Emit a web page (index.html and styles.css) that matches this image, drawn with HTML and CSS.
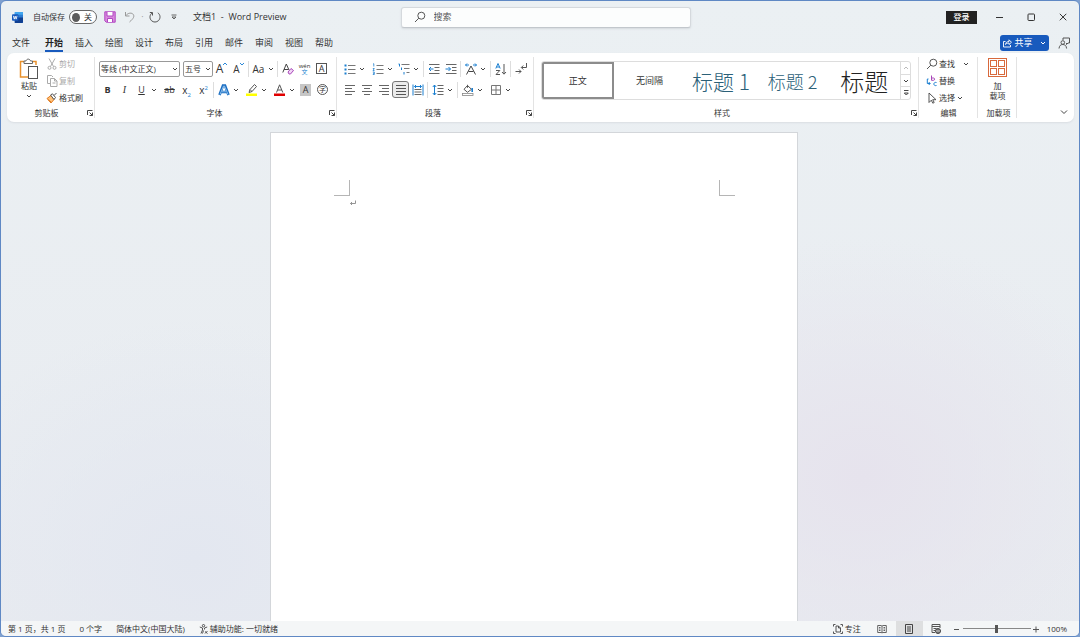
FILE: index.html
```
<!DOCTYPE html>
<html lang="zh-CN">
<head>
<meta charset="utf-8">
<title>文档1 - Word Preview</title>
<link rel="stylesheet" href="styles.css">
</head>
<body>
<svg class="defs" aria-hidden="true">
  <symbol id="chev" viewBox="0 0 8 8"><path d="M2 3l2 2 2-2" fill="none" stroke="#444" stroke-width="1"/></symbol>
  <symbol id="launch" viewBox="0 0 8 8"><path d="M1.500 6V1.500h5M3.500 3.500l3 3M6.500 3.500v3h-3" fill="none" stroke="#444" stroke-width="1"/></symbol>
  <symbol id="lens" viewBox="0 0 12 12"><circle cx="7.300" cy="4.700" r="3.500" fill="none" stroke="#555"/><path d="M4.800 7.200L1 11" stroke="#555"/></symbol>
</svg>
<div class="window">
  <header class="titlebar">
    <div class="title-left">
      <svg class="logo" viewBox="0 0 12 12"><rect x="3" y="0" width="9" height="12" rx="1" fill="#2b7cd3"/><rect x="3" y="0" width="9" height="3" fill="#41a5ee"/><path d="M3 6h9v5a1 1 0 0 1-1 1H3z" fill="#103f91"/><rect x="0" y="2.500" width="7" height="7" rx="1" fill="#185abd"/><path d="M1.500 4.200l1 3.600 1-3.300 1 3.300 1-3.600" fill="none" stroke="#fff" stroke-width=".9"/></svg>
      <label class="autosave" for="autosave">自动保存</label>
      <span class="toggle"><input type="checkbox" id="autosave"><span class="toggle-text">关</span></span>
      <button class="qa save" aria-label="保存"><svg class="i12" viewBox="0 0 12 12"><path d="M.8.8h10.400v10.400H2.200L.8 9.800z" fill="#d88add" stroke="#b146c2"/><path d="M3 1v4h6V1" fill="#fff" stroke="#b146c2"/><path d="M3.500 11V7.500h5V11" fill="#fff" stroke="#b146c2"/></svg></button>
      <button class="qa undo" aria-label="撤消"><svg class="i12" viewBox="0 0 12 12"><path d="M1.500 1v4h4M1.700 4.800C4 1.500 8 1.500 9.300 3.500c1.300 2 .2 4-3.800 7.500" fill="none" stroke="#999"/></svg></button>
      <span class="dot">·</span>
      <button class="qa" aria-label="重复"><svg class="i12" viewBox="0 0 12 12"><path d="M3.500 1.500H.8M3.500 1.500v3M3 2C.5 4 .3 7.500 2.500 9.700c2 1.800 5 1.800 7-.1 2.200-2.200 2-6-.7-7.800" fill="none" stroke="#555"/></svg></button>
      <button class="qa more" aria-label="自定义快速访问工具栏"><svg class="i8" viewBox="0 0 8 8"><path d="M1.500 2h5M2 4l2 2 2-2z" fill="none" stroke="#555" stroke-width=".9"/></svg></button>
      <span class="doc-title">文档1&nbsp; -&nbsp; Word Preview</span>
    </div>
    <label class="search"><svg class="i12" viewBox="0 0 12 12"><use href="#lens"/></svg><input type="text" placeholder="搜索" aria-label="搜索"></label>
    <div class="title-right">
      <button class="signin">登录</button>
      <button class="win" aria-label="最小化"><svg class="i8" viewBox="0 0 8 8"><path d="M1 4.500h7" stroke="#333"/></svg></button>
      <button class="win" aria-label="最大化"><svg class="i8" viewBox="0 0 8 8"><rect x="1" y="1" width="6.500" height="6.500" rx=".8" fill="none" stroke="#333"/></svg></button>
      <button class="win" aria-label="关闭"><svg class="i8" viewBox="0 0 8 8"><path d="M.8.8l6.500 6.500M7.300.8L.8 7.300" stroke="#333"/></svg></button>
    </div>
  </header>

  <nav class="tabs">
    <button class="tab file">文件</button><button class="tab active"><span>开始</span></button><button class="tab">插入</button><button class="tab">绘图</button><button class="tab">设计</button><button class="tab">布局</button><button class="tab">引用</button><button class="tab">邮件</button><button class="tab">审阅</button><button class="tab">视图</button><button class="tab">帮助</button>
    <div class="tabs-end">
      <button class="share"><svg class="i10" viewBox="0 0 10 10"><path d="M3.500 3.500H1.500v5.500h7V7M3.500 6.500c.3-2.200 1.500-3 3.500-3V1.800l2.500 2.500L7 6.500V5c-1.500 0-2.500.3-3.500 1.500z" fill="none" stroke="#fff" stroke-width=".9"/></svg><span>共享</span><svg class="i8" viewBox="0 0 8 8"><path d="M2 3l2 2 2-2" fill="none" stroke="#fff"/></svg></button>
      <button class="qa" aria-label="批注"><svg class="i12" viewBox="0 0 12 12"><path d="M5 3V1h6.500v5H10L8.500 7.500V6" fill="none" stroke="#555"/><circle cx="4.800" cy="5.500" r="1.800" fill="none" stroke="#555"/><path d="M1 11.500c.3-3 1.800-4 3.800-4s3.500 1 3.800 4" fill="none" stroke="#555"/></svg></button>
    </div>
  </nav>

  <section class="ribbon">
    <div class="group clipboard">
      <div class="group-body clip-body">
        <button class="big paste"><svg class="i22" viewBox="0 0 22 22"><path d="M6 3.500H2.500v15.500h8M14.500 3.500H18V7" fill="none" stroke="#e8912d" stroke-width="1.500"/><path d="M6 5.500V3h2c.5-2.500 4-2.500 4.500 0h2v2.500z" fill="#fff" stroke="#666"/><rect x="10.500" y="8.500" width="9" height="12" fill="#fff" stroke="#555"/></svg><span>粘贴</span><svg class="i8" viewBox="0 0 8 8"><use href="#chev"/></svg></button>
        <div class="stack">
          <button class="cmd" disabled><svg class="i12" viewBox="0 0 12 12"><path d="M3 .5l4.500 8M9 .5l-4.500 8" stroke="#aaa"/><circle cx="3.500" cy="9.800" r="1.500" fill="none" stroke="#aaa"/><circle cx="8.500" cy="9.800" r="1.500" fill="none" stroke="#aaa"/></svg>剪切</button>
          <button class="cmd" disabled><svg class="i12" viewBox="0 0 12 12"><path d="M5 8.500H1.500v-8h4l1.500 1.500" fill="none" stroke="#aaa"/><path d="M4.500 3.500h4l2.500 2.500v5.500H4.500zM8.500 3.500V6H11M6.500 8h3" fill="none" stroke="#aaa"/></svg>复制</button>
          <button class="cmd"><svg class="i12" viewBox="0 0 12 12"><path d="M1 6.500l4-3 3 4-3 3.500z" fill="#ffc27a" stroke="#e07a1f"/><path d="M4.500 3L6.500 1.800 9.500 5.500 8 7.500zM8 3.500L10.500 1" fill="#fff" stroke="#555"/><path d="M2 7.500l3 2.500" stroke="#e07a1f"/></svg>格式刷</button>
        </div>
      </div>
      <div class="group-label"><span>剪贴板</span><button aria-label="剪贴板选项"><svg class="i8" viewBox="0 0 8 8"><use href="#launch"/></svg></button></div>
    </div>

    <div class="group font">
      <div class="group-body">
        <div class="row">
          <label class="combo family"><select aria-label="字体"><option>等线 (中文正文)</option></select><svg class="i8" viewBox="0 0 8 8"><use href="#chev"/></svg></label>
          <label class="combo size"><select aria-label="字号"><option>五号</option></select><svg class="i8" viewBox="0 0 8 8"><use href="#chev"/></svg></label>
          <button class="ib" aria-label="增大字号"><span class="grow">A</span><svg class="sup" viewBox="0 0 4 8"><path d="M0 3l2-2 2 2" fill="none" stroke="#2b88d8"/></svg></button>
          <button class="ib" aria-label="减小字号"><span class="shrink">A</span><svg class="sup" viewBox="0 0 4 8"><path d="M0 1l2 2 2-2" fill="none" stroke="#2b88d8"/></svg></button>
          <i class="sep"></i>
          <button class="ib case" aria-label="更改大小写">Aa</button><button class="chev" aria-label="大小写选项"><svg class="i8" viewBox="0 0 8 8"><use href="#chev"/></svg></button>
          <i class="sep"></i>
          <button class="ib" aria-label="清除格式"><svg class="i12" viewBox="0 0 12 12"><path d="M.8 9.500L4.300 1 7 7M2 6.500h4.500" fill="none" stroke="#444"/><path d="M6 9l3-3.500 2.500 2L8.500 11H7z" fill="#f0d5f5" stroke="#a847b8"/></svg></button>
          <button class="ib pinyin" aria-label="拼音指南"><span>wén</span><span class="wen">文</span></button>
          <button class="ib" aria-label="字符边框"><span class="boxed">A</span></button>
        </div>
        <div class="row">
          <button class="ib bold" aria-label="加粗">B</button>
          <button class="ib italic" aria-label="倾斜">I</button>
          <button class="ib under" aria-label="下划线">U</button><button class="chev" aria-label="下划线选项"><svg class="i8" viewBox="0 0 8 8"><use href="#chev"/></svg></button>
          <button class="ib strike" aria-label="删除线">ab</button>
          <button class="ib script" aria-label="下标"><span>x<sub>2</sub></span></button>
          <button class="ib script" aria-label="上标"><span>x<sup>2</sup></span></button>
          <i class="sep"></i>
          <button class="ib" aria-label="文本效果"><svg class="i12" viewBox="0 0 12 12"><path d="M1.500 11L5 1.500h2L10.500 11M3.500 8h5" fill="none" stroke="#1b6ec2" stroke-width="2.600"/><path d="M2 10.500L5.500 2h1L10 10.500M4 7.800h4" fill="none" stroke="#a9d3f5" stroke-width=".8"/></svg></button><button class="chev" aria-label="文本效果选项"><svg class="i8" viewBox="0 0 8 8"><use href="#chev"/></svg></button>
          <button class="ib push" aria-label="突出显示"><svg class="i12" viewBox="0 0 12 12"><rect x="0" y="9.500" width="11" height="2.500" fill="#ff0"/><path d="M3 8.500l1-3 4.500-5 2 2L6 7.500zM4 5.500l2 2" fill="#fff" stroke="#555"/></svg></button><button class="chev" aria-label="突出显示选项"><svg class="i8" viewBox="0 0 8 8"><use href="#chev"/></svg></button>
          <button class="ib push" aria-label="字体颜色"><svg class="i12" viewBox="0 0 12 12"><rect x="0" y="9.500" width="11" height="2.500" fill="#e00000"/><path d="M2.500 8.500L5.600.8 8.800 8.500M3.500 6h4.300" fill="none" stroke="#555"/></svg></button><button class="chev" aria-label="字体颜色选项"><svg class="i8" viewBox="0 0 8 8"><use href="#chev"/></svg></button>
          <button class="ib" aria-label="字符底纹"><span class="shaded">A</span></button>
          <button class="ib" aria-label="带圈字符"><span class="circled">字</span></button>
        </div>
      </div>
      <div class="group-label wide-label"><span>字体</span><button aria-label="字体选项"><svg class="i8" viewBox="0 0 8 8"><use href="#launch"/></svg></button></div>
    </div>

    <div class="group para">
      <div class="group-body">
        <div class="row">
          <button class="ib" aria-label="项目符号"><svg class="i12" viewBox="0 0 12 12"><path d="M4 2.500h7.500M4 6.500h7.500M4 10.500h7.500" stroke="#777"/><path d="M.5 2.500h2M.5 6.500h2M.5 10.500h2" stroke="#1b7fd0" stroke-width="2"/></svg></button><button class="chev" aria-label="项目符号选项"><svg class="i8" viewBox="0 0 8 8"><use href="#chev"/></svg></button>
          <button class="ib push" aria-label="编号"><svg class="i12" viewBox="0 0 12 12"><path d="M4.500 2.500h7M4.500 6.500h7M4.500 10.500h7" stroke="#777"/><path d="M1 .8h.8v2.700M.8 5.500h1.500L1 7.500h1.500M.8 9h1.500v2.500H.8M1 10.300h1" fill="none" stroke="#1b7fd0" stroke-width=".8"/></svg></button><button class="chev" aria-label="编号选项"><svg class="i8" viewBox="0 0 8 8"><use href="#chev"/></svg></button>
          <button class="ib" aria-label="多级列表"><svg class="i12" viewBox="0 0 12 12"><path d="M3.500 1.500h8M6 5.500h5.500M8.500 9.500h3" stroke="#777"/><path d="M.5 1h1v2.500M3.500 4.500v2.500M6 9v2.500" fill="none" stroke="#1b7fd0"/></svg></button><button class="chev" aria-label="多级列表选项"><svg class="i8" viewBox="0 0 8 8"><use href="#chev"/></svg></button>
          <i class="sep wide"></i>
          <button class="ib" aria-label="减少缩进"><svg class="i12" viewBox="0 0 12 12"><path d="M1 1.500h10.500M6.500 4.500h5M6.500 7.500h5M1 10.500h10.500" stroke="#666"/><path d="M5.500 6H1M3 4L1 6l2 2" fill="none" stroke="#1b7fd0"/></svg></button>
          <button class="ib" aria-label="增加缩进"><svg class="i12" viewBox="0 0 12 12"><path d="M1 1.500h10.500M7 4.500h4.500M7 7.500h4.500M1 10.500h10.500" stroke="#666"/><path d="M.5 6h5M3.500 4l2 2-2 2" fill="none" stroke="#1b7fd0"/></svg></button>
          <i class="sep"></i>
          <button class="ib" aria-label="中文版式"><svg class="i12" viewBox="0 0 12 12"><path d="M1.500 11.500L6 3l4.500 8.500M3.500 8.500h5" fill="none" stroke="#444"/><path d="M.5 2h3.500M2 .5L.5 2 2 3.500M8 2h3.500M10 .5L11.500 2 10 3.500" fill="none" stroke="#1b7fd0"/></svg></button><button class="chev" aria-label="中文版式选项"><svg class="i8" viewBox="0 0 8 8"><use href="#chev"/></svg></button>
          <i class="sep wide"></i>
          <button class="ib" aria-label="排序"><svg class="i12" viewBox="0 0 12 12"><path d="M.8 5.500L3 .5l2.200 5M1.500 4h3" fill="none" stroke="#1b7fd0"/><path d="M1 7.500h3.800L1 11.500h4M9 1v10M7 9l2 2.200L11 9" fill="none" stroke="#555"/></svg></button>
          <i class="sep"></i>
          <button class="ib" aria-label="显示编辑标记"><svg class="i12" viewBox="0 0 12 12"><path d="M11.500 0v4.500H6.500M8.300 2.500l-2 2 2 2M.5 8.500H6M4 6.500l2 2-2 2" fill="none" stroke="#555"/></svg></button>
        </div>
        <div class="row">
          <button class="ib" aria-label="左对齐"><svg class="i12" viewBox="0 0 12 12"><path d="M1 1.500h10M1 4.500h7M1 7.500h10M1 10.500h7" stroke="#666"/></svg></button>
          <button class="ib" aria-label="居中"><svg class="i12" viewBox="0 0 12 12"><path d="M1 1.500h10M3 4.500h6M1 7.500h10M3 10.500h6" stroke="#666"/></svg></button>
          <button class="ib" aria-label="右对齐"><svg class="i12" viewBox="0 0 12 12"><path d="M1 1.500h10M4 4.500h7M1 7.500h10M4 10.500h7" stroke="#666"/></svg></button>
          <button class="ib pressed" aria-label="两端对齐" aria-pressed="true"><svg class="i12" viewBox="0 0 12 12"><path d="M1 1.500h10M1 4.500h10M1 7.500h10M1 10.500h10" stroke="#555"/></svg></button>
          <button class="ib" aria-label="分散对齐"><svg class="i12" viewBox="0 0 12 12"><path d="M1 .5v11M11 .5v11M2.500 2.500h7M4 1L2.500 2.500 4 4M8 1l1.500 1.500L8 4" fill="none" stroke="#1b7fd0"/><path d="M2.500 5.500h7M2.500 8h7M2.500 10.500h7" stroke="#666"/></svg></button>
          <i class="sep"></i>
          <button class="ib" aria-label="行距"><svg class="i12" viewBox="0 0 12 12"><path d="M5.500 1.500h6M5.500 4.500h6M5.500 7.500h6M5.500 10.500h6" stroke="#666"/><path d="M2.500 1v10M.8 3l1.700-2 1.700 2M.8 9l1.700 2 1.700-2" fill="none" stroke="#1b7fd0"/></svg></button><button class="chev" aria-label="行距选项"><svg class="i8" viewBox="0 0 8 8"><use href="#chev"/></svg></button>
          <i class="sep wide"></i>
          <button class="ib" aria-label="底纹"><svg class="i12" viewBox="0 0 12 12"><rect x=".5" y="9.500" width="10.500" height="2" fill="#fff" stroke="#888" stroke-width=".8"/><path d="M5.500.8v3M5.500 1.500l4 3.800-4 3-3.500-3z" fill="#fff" stroke="#555"/><path d="M10.200 4v4" stroke="#1b7fd0" stroke-width="1.600"/></svg></button><button class="chev" aria-label="底纹选项"><svg class="i8" viewBox="0 0 8 8"><use href="#chev"/></svg></button>
          <button class="ib push" aria-label="边框"><svg class="i12" viewBox="0 0 12 12"><path d="M1.500 1.500h9v9h-9zM6 1.500v9M1.500 6h9" fill="none" stroke="#777"/></svg></button><button class="chev" aria-label="边框选项"><svg class="i8" viewBox="0 0 8 8"><use href="#chev"/></svg></button>
        </div>
      </div>
      <div class="group-label"><span>段落</span><button aria-label="段落选项"><svg class="i8" viewBox="0 0 8 8"><use href="#launch"/></svg></button></div>
    </div>

    <div class="group styles">
      <div class="group-body styles-body">
        <div class="gallery">
          <button class="style chosen">正文</button>
          <button class="style">无间隔</button>
          <button class="style h1">标题 1</button>
          <button class="style h2">标题 2</button>
          <button class="style title">标题</button>
          <div class="gallery-nav">
            <button aria-label="上一行" disabled><svg class="i8" viewBox="0 0 8 8"><path d="M2 5l2-2 2 2" fill="none" stroke="#bbb"/></svg></button>
            <button aria-label="下一行"><svg class="i8" viewBox="0 0 8 8"><use href="#chev"/></svg></button>
            <button aria-label="其他样式"><svg class="i8" viewBox="0 0 8 8"><path d="M2 1.500h4.500M2.300 4l2 2 2-2z" fill="none" stroke="#444"/></svg></button>
          </div>
        </div>
      </div>
      <div class="group-label"><span>样式</span><button aria-label="样式选项"><svg class="i8" viewBox="0 0 8 8"><use href="#launch"/></svg></button></div>
    </div>

    <div class="group edit">
      <div class="group-body stack">
        <button class="cmd"><svg class="i12" viewBox="0 0 12 12"><use href="#lens"/></svg>查找<svg class="i8 far" viewBox="0 0 8 8"><use href="#chev"/></svg></button>
        <button class="cmd"><svg class="i12" viewBox="0 0 12 12"><path d="M5.500.5v4.800M5.500 3h2c1.500 0 1.500 2.300 0 2.300h-2" fill="none" stroke="#a847b8"/><path d="M2.500 4H1.300v4.500H4M2.700 7L4.200 8.500 2.700 10M10.500 7.500C7 6.500 7 11.500 10.500 10.500" fill="none" stroke="#1b7fd0"/></svg>替换</button>
        <button class="cmd"><svg class="i12" viewBox="0 0 12 12"><path d="M3 1v9.500l2.300-2.300 1.500 3 1.400-.7-1.500-2.800H10z" fill="none" stroke="#444" stroke-width=".9"/></svg>选择<svg class="i8" viewBox="0 0 8 8"><use href="#chev"/></svg></button>
      </div>
      <div class="group-label wide-label"><span>编辑</span></div>
    </div>

    <div class="group addins">
      <div class="group-body">
        <button class="big"><svg class="i20" viewBox="0 0 20 20"><g fill="#fff" stroke="#d8693c"><rect x=".5" y=".5" width="18" height="18"/><rect x="2.500" y="2.500" width="6" height="6"/><rect x="10.500" y="2.500" width="6" height="6"/><rect x="2.500" y="10.500" width="6" height="6"/><rect x="10.500" y="10.500" width="6" height="6"/></g></svg><span class="addin-name">加</span><span>载项</span></button>
      </div>
      <div class="group-label wide-label"><span>加载项</span></div>
    </div>
    <div class="ribbon-end"><button class="collapse" aria-label="折叠功能区"><svg class="i8" viewBox="0 0 8 8"><path d="M1 2.500l3 3 3-3" fill="none" stroke="#444"/></svg></button></div>
  </section>

  <main class="workspace">
    <article class="page">
      <div class="corners"><i class="corner left"></i><i class="corner right"></i></div>
      <p class="para-mark"><svg class="i8" viewBox="0 0 8 8"><path d="M6.500 1.500v3h-5M3 3L1.500 4.500 3 6" fill="none" stroke="#888" stroke-width=".9"/></svg></p>
    </article>
  </main>

  <footer class="status">
    <span>第 1 页，共 1 页</span>
    <span>0 个字</span>
    <span>简体中文(中国大陆)</span>
    <button class="access"><svg class="i10" viewBox="0 0 10 10"><circle cx="4.500" cy="1.700" r="1.200" fill="none" stroke="#444" stroke-width=".9"/><path d="M.8 3l2.700 1v2L2 9.500M8.200 3L5.500 4v1.500M4.500 6.500L3.500 9.500" fill="none" stroke="#444" stroke-width=".9"/><path d="M6 7.500l2.500 2M8.500 7L6 9.500" stroke="#444" stroke-width=".9"/></svg>辅助功能: 一切就绪</button>
    <div class="status-right">
      <button class="focus"><svg class="i10" viewBox="0 0 10 10"><path d="M2.500.5h-2v2M.5 7.500v2h2M7.500.5h2v2M9.500 7.500v2h-2M3 2h2.500l2 2v4H3zM5.500 2v2h2" fill="none" stroke="#444" stroke-width=".9"/></svg>专注</button>
      <button class="view" aria-label="阅读视图"><svg class="i10" viewBox="0 0 10 10"><path d="M.7 1.500h3.500l.8.700.8-.7h3.500v7H5.800L5 9l-.8-.5H.7zM5 2v7M2 3.500h1.500M2 5h1.500M2 6.500h1.500M6.500 3.500H8M6.500 5H8M6.500 6.500H8" fill="none" stroke="#555" stroke-width=".9"/></svg></button>
      <button class="view current" aria-label="页面视图"><svg class="i10" viewBox="0 0 10 10"><path d="M1.500.5h7v9h-7zM3 3h4M3 5h4M3 7h4" fill="none" stroke="#444"/></svg></button>
      <button class="view" aria-label="Web 版式视图"><svg class="i10" viewBox="0 0 10 10"><path d="M4 8.500H1v-8h8V4M1 2.500h8M2.500 4.500h3M2.500 6.500h1.500" fill="none" stroke="#555"/><circle cx="7" cy="7" r="2.500" fill="#777" stroke="#444"/><path d="M5 7h4" stroke="#eee" stroke-width=".7"/></svg></button>
      <button class="zoom-step" aria-label="缩小"><svg class="i8" viewBox="0 0 8 8"><path d="M1 4.500h5" stroke="#555"/></svg></button>
      <input class="zoom" type="range" min="0" max="100" value="50" aria-label="显示比例">
      <button class="zoom-step" aria-label="放大"><svg class="i8" viewBox="0 0 8 8"><path d="M1 4.500h6M4 1.500v6" stroke="#555"/></svg></button>
      <span class="percent">100%</span>
    </div>
  </footer>
</div>
</body>
</html>
```
FILE: styles.css
```
* { box-sizing: border-box; }
body {
  margin: 0;
  background: #7fa0cf;
  font: 9px/12px "Open Sans", "Noto Sans CJK SC", sans-serif;
  color: #333;
}
button, input, select { font: inherit; color: inherit; }
button { border: 0; padding: 0; margin: 0; background: none; display: flex; align-items: center; justify-content: center; white-space: nowrap; }
svg { display: block; flex: none; }
.defs { width: 0; height: 0; position: absolute; }
.i8 { width: 8px; height: 8px; }
.i10 { width: 10px; height: 10px; }
.i12 { width: 12px; height: 12px; }
.i20 { width: 20px; height: 20px; }
.i22 { width: 22px; height: 22px; }

.window {
  height: 100vh;
  display: flex;
  flex-direction: column;
  border: 1px solid #5f88c4;
  border-radius: 6px;
  overflow: hidden;
  background:
    radial-gradient(ellipse 280px 240px at 80% 75%, #e6e3ed, transparent),
    radial-gradient(ellipse 280px 240px at 18% 88%, #e3e7f0, transparent),
    linear-gradient(#ebf0f3, #e8ebf0);
}

.titlebar { display: grid; grid-template-columns: 1fr 290px 1fr; align-items: center; height: 32px; padding-left: 11px; }
.title-left { display: flex; align-items: center; white-space: nowrap; }
.logo { width: 11px; height: 11px; }
.autosave { font-size: 8px; margin-left: 10px; }
.toggle { display: flex; align-items: center; width: 28px; height: 14px; margin: 0 6px 0 4px; padding: 0 4px 0 2px; border: 1px solid #666; border-radius: 7px; background: #fff; gap: 4px; font-size: 8px; }
.toggle input { appearance: none; width: 9px; height: 9px; margin: 0; border-radius: 50%; background: #5c5c5c; }
.qa { width: 14px; height: 14px; }
.undo { margin-left: 6px; }
.dot { width: 11px; text-align: center; color: #999; }
.more { margin-left: 5px; }
.doc-title { margin-left: 12px; }
.search { display: flex; align-items: center; gap: 8px; height: 21px; padding: 0 12px; background: #fcfdfd; border: 1px solid #d5d9dd; border-bottom-color: #c2c7cc; border-radius: 3px; box-shadow: 0 1px 2px #d5dade; }
.search input { flex: 1; min-width: 0; border: 0; background: none; padding: 0; outline: 0; }
.search input::placeholder { color: #555; opacity: 1; }
.title-right { display: flex; justify-content: flex-end; align-items: center; }
.signin { width: 31px; height: 13px; margin-right: 6px; background: #222; color: #fff; font-size: 8px; font-weight: 500; }
.win { width: 32px; height: 32px; }

.tabs { display: flex; height: 20px; padding: 0 8px 0 5px; }
.tab { width: 30px; }
.file { margin-right: 3px; }
.active { font-weight: 700; color: #222; }
.active span { padding: 3px 0 1px; border-bottom: 2px solid #185abd; }
.tabs-end { display: flex; align-items: center; gap: 8px; margin-left: auto; }
.share { width: 49px; height: 16px; gap: 2px; background: #185abd; color: #fff; border-radius: 3px; }
.share .i8 { margin-left: 4px; }

.ribbon { display: flex; height: 69px; margin: 0 5px 0 6px; background: #fff; border-radius: 7px; box-shadow: 0 1px 2px #d9dde2; }
.group { display: flex; flex-direction: column; padding: 5px 0 3px; position: relative; }
.group::after { content: ""; position: absolute; right: 0; top: 4px; bottom: 4px; width: 1px; background: #e3e3e3; }
.group-body { flex: 1; min-height: 0; }
.group-label { display: flex; height: 12px; align-items: center; font-size: 8px; color: #333; }
.group-label span { flex: 1; text-align: center; }
.group-label button { margin-right: 1px; }
.wide-label { padding-left: 2px; }
.clipboard { width: 88px; }
.font { width: 242px; padding-left: 4px; }
.para { width: 197px; padding-left: 4px; }
.styles { flex: 1; min-width: 0; }
.edit { width: 59px; padding-left: 7px; }
.edit .group-label { padding: 0 7px 0 0; }
.addins { width: 39px; }
.ribbon-end { display: flex; align-items: flex-end; justify-content: flex-end; width: 57px; padding: 6px; }
.clip-body { display: flex; padding-left: 8px; gap: 3px; }
.big { flex-direction: column; font-size: 8px; line-height: 10px; justify-content: flex-start; width: 100%; }
.paste { width: 28px; gap: 1px; }
.addin-name { margin-top: 3px; }
.stack { display: flex; flex-direction: column; align-items: flex-start; }
.group .stack { margin-top: -3px; }
.cmd { height: 17px; gap: 1px; font-size: 8px; }
.cmd:disabled { color: #aaa; }
.far { margin-left: 6px; }

.row { display: flex; align-items: center; height: 21px; }
.ib { width: 17px; height: 17px; flex: none; }
.chev { width: 8px; height: 17px; flex: none; margin-right: 1px; }
.push { margin-left: 2px; }
.sep { width: 1px; height: 16px; margin: 0 1px; background: #ddd; }
.wide { margin-left: 2px; }
.combo { display: flex; align-items: center; height: 16px; padding-left: 1px; border: 1px solid #999; border-radius: 2px; }
.combo select { appearance: none; flex: 1; min-width: 0; border: 0; padding: 0; background: none; font-size: 8px; }
.family { width: 81px; margin-right: 3px; }
.size { width: 30px; }
.grow { font-size: 12px; }
.shrink { font-size: 10px; }
.sup { width: 4px; height: 8px; align-self: flex-start; margin-top: 2px; }
.case { font-size: 10px; }
.pinyin { flex-direction: column; font-size: 6px; line-height: 6px; }
.wen { color: #1b7fd0; }
.boxed { width: 11px; height: 11px; border: 1px solid #555; line-height: 9px; }
.shaded { width: 11px; height: 12px; background: #c6c6c6; }
.circled { width: 11px; height: 11px; border: 1px solid #555; border-radius: 50%; font-size: 7px; line-height: 9px; }
.bold { font-weight: 700; }
.italic { font-style: italic; font-family: "Liberation Serif", serif; font-size: 10px; }
.under { text-decoration: underline; }
.strike { text-decoration: line-through; margin-left: 2px; }
.script { font-size: 10px; }
sub, sup { font-size: 6px; line-height: 0; color: #1b7fd0; }
.pressed { border: 1px solid #777; border-radius: 3px; background: #ebebeb; }

.styles-body { padding: 3px 8px 0 7px; }
.gallery { display: flex; height: 39px; border: 1px solid #ddd; border-radius: 3px; overflow: hidden; }
.style { flex: 1 1 20%; min-width: 0; font-family: "Noto Sans CJK SC", sans-serif; }
.chosen { border: 2px solid #8c8c8c; }
.h1, .h2 { color: #2b6078; font-weight: 300; font-size: 21px; }
.h2 { font-size: 18px; }
.title { font-size: 24px; font-weight: 300; color: #222; }
.gallery-nav { display: flex; flex: none; flex-direction: column; width: 10px; border-left: 1px solid #ddd; }
.gallery-nav button { flex: 1; }
.gallery-nav button + button { border-top: 1px solid #ddd; }

.workspace { flex: 1; min-height: 0; display: flex; justify-content: center; padding: 10px 12px 0 0; overflow: hidden; }
.page { width: 528px; padding: 47px 62px 0 63px; background: #fff; border: 1px solid #d3d6da; border-bottom: 0; }
.corners { display: flex; justify-content: space-between; }
.corner { width: 16px; height: 16px; border-bottom: 1px solid #b5b5b5; }
.left { border-right: 1px solid #b5b5b5; }
.right { border-left: 1px solid #b5b5b5; }
.para-mark { margin: 3px 0 0 15px; }

.status { display: flex; align-items: center; gap: 14px; height: 15px; padding: 0 12px 0 7px; background: #f4f6f7; font-size: 8px; white-space: nowrap; }
.access { gap: 1px; }
.status-right { display: flex; align-items: center; margin-left: auto; }
.focus { gap: 2px; margin-right: 8px; }
.view { width: 27px; height: 15px; }
.current { background: #dedfe0; }
.zoom-step { width: 9px; height: 12px; }
.view + .zoom-step { margin-left: 3px; }
.zoom { appearance: none; width: 68px; height: 12px; margin: 0 1px; background: linear-gradient(#888, #888) center / 100% 1px no-repeat; }
.zoom::-webkit-slider-thumb { appearance: none; width: 3px; height: 8px; background: #555; }
.percent { margin-left: 6px; }
```
